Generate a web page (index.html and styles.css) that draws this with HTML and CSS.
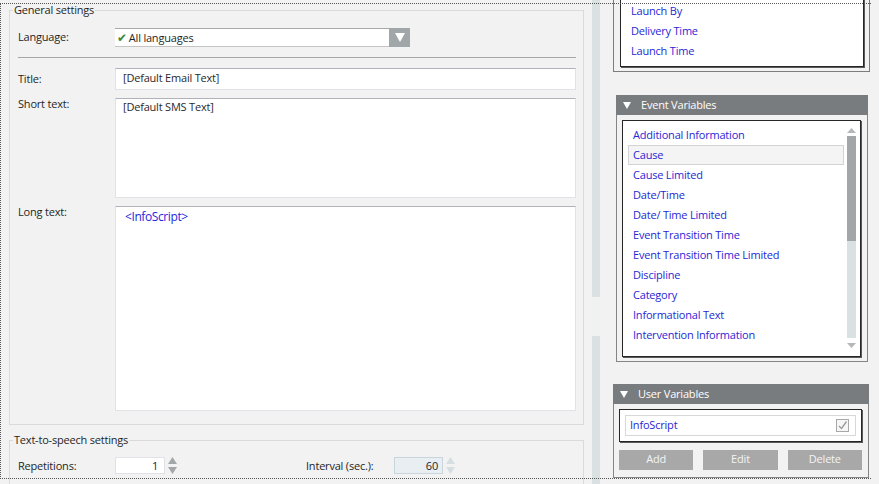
FILE: index.html
```html
<!DOCTYPE html>
<html>
<head>
<meta charset="utf-8">
<link rel="stylesheet" href="styles.css">
</head>
<body>
<div class="app">
  <div class="left">
    <fieldset class="group general">
      <legend>General settings</legend>
      <div class="form">
        <div class="row">
          <span class="lbl lbl-lang">Language:</span>
          <div class="select">
            <span class="check">✔</span><span class="sel-text">All languages</span>
            <span class="sel-btn"><svg width="10" height="9" viewBox="0 0 10 9"><polygon points="0,0 10,0 5,9" fill="#fff"/></svg></span>
          </div>
        </div>
        <div class="sep"></div>
        <div class="row">
          <span class="lbl">Title:</span>
          <div class="field input">[Default Email Text]</div>
        </div>
        <div class="row top">
          <span class="lbl lbl-short">Short text:</span>
          <div class="field area short">[Default SMS Text]</div>
        </div>
        <div class="row top">
          <span class="lbl lbl-long">Long text:</span>
          <div class="field area long"><span class="var">&lt;InfoScript&gt;</span></div>
        </div>
      </div>
    </fieldset>
    <fieldset class="group tts">
      <legend>Text-to-speech settings</legend>
      <div class="tts-row">
        <span class="lbl">Repetitions:</span>
        <div class="spin">
          <div class="spin-box">1</div>
          <svg class="spin-arrows" width="9" height="17" viewBox="0 0 9 17"><polygon points="4.5,0 9,7 0,7" fill="#a2a7aa"/><polygon points="0,10 9,10 4.5,17" fill="#a2a7aa"/></svg>
        </div>
        <span class="lbl lbl-interval">Interval (sec.):</span>
        <div class="spin disabled">
          <div class="spin-box">60</div>
          <svg class="spin-arrows" width="9" height="17" viewBox="0 0 9 17"><polygon points="4.5,0 9,7 0,7" fill="#d6dee2"/><polygon points="0,10 9,10 4.5,17" fill="#d6dee2"/></svg>
        </div>
      </div>
    </fieldset>
  </div>
  <div class="splitter"><div class="grip"></div></div>
  <div class="right">
    <div class="outer-box">
      <div class="list-box top-list">
        <div class="item">Launch By</div>
        <div class="item">Delivery Time</div>
        <div class="item">Launch Time</div>
      </div>
    </div>
    <div class="panel event">
      <div class="panel-head">
        <svg width="8" height="7" viewBox="0 0 8 7"><polygon points="0,0 8,0 4,7" fill="#fff"/></svg>
        <span>Event Variables</span>
      </div>
      <div class="panel-body">
        <div class="list-box scroll-list">
          <div class="items">
            <div class="item">Additional Information</div>
            <div class="item selected">Cause</div>
            <div class="item">Cause Limited</div>
            <div class="item">Date/Time</div>
            <div class="item">Date/ Time Limited</div>
            <div class="item">Event Transition Time</div>
            <div class="item">Event Transition Time Limited</div>
            <div class="item">Discipline</div>
            <div class="item">Category</div>
            <div class="item">Informational Text</div>
            <div class="item">Intervention Information</div>
          </div>
          <div class="scrollbar">
            <svg class="arrow" width="9" height="5" viewBox="0 0 9 5"><polygon points="4.5,0 9,5 0,5" fill="#b4b8ba"/></svg>
            <div class="track"><div class="thumb"></div></div>
            <svg class="arrow" width="9" height="5" viewBox="0 0 9 5"><polygon points="0,0 9,0 4.5,5" fill="#b4b8ba"/></svg>
          </div>
        </div>
      </div>
    </div>
    <div class="panel user">
      <div class="panel-head">
        <svg width="8" height="7" viewBox="0 0 8 7"><polygon points="0,0 8,0 4,7" fill="#fff"/></svg>
        <span>User Variables</span>
      </div>
      <div class="panel-body">
        <div class="list-box user-list">
          <div class="user-item">
            <span>InfoScript</span>
            <span class="cb"><svg width="11" height="11" viewBox="0 0 11 11"><polyline points="2,6 4.5,8.5 9.5,1.5" fill="none" stroke="#9a9a9a" stroke-width="1.3"/></svg></span>
          </div>
        </div>
        <div class="buttons">
          <button class="btn">Add</button>
          <button class="btn">Edit</button>
          <button class="btn">Delete</button>
        </div>
      </div>
    </div>
  </div>
  <div class="focus-rect"></div>
</div>
</body>
</html>
```

FILE: styles.css
```css
* { box-sizing: border-box; }
html, body { margin: 0; padding: 0; }
body {
  background: #f2f2f2;
  font-family: "Open Sans", "Segoe UI", sans-serif;
  font-size: 11px;
  letter-spacing: -0.2px;
  color: #1f1f1f;
  overflow: hidden;
}
.app {
  position: relative;
  display: flex;
  width: 879px;
  height: 484px;
  overflow: hidden;
}
.left {
  width: 592px;
  flex: none;
  padding: 2px 8px 0 9px;
}
.group {
  margin: 0;
  padding: 0;
  border: 1px solid #dadada;
  min-width: 0;
}
.group legend {
  margin-left: 3px;
  padding: 0 1px;
  line-height: 16px;
  height: 16px;
}
.group legend { padding-bottom: 0; }
.form {
  padding: 10px 7px 13px 8px;
}
.row {
  display: flex;
  align-items: center;
}
.row + .row { margin-top: 8px; }
.row.top { align-items: flex-start; }
.lbl {
  width: 97px;
  flex: none;
  line-height: 16px;
}
.lbl-lang { padding-bottom: 2px; }
.lbl-short { margin-top: -2px; }
.lbl-long { margin-top: -2px; }
.select {
  width: 295px;
  height: 19px;
  display: flex;
  align-items: center;
  background: #fff;
  border-top: 1px solid #a9a9a9;
  border-bottom: 1px solid #c4c4c4;
  line-height: 15px;
}
.check {
  color: #3b8a3b;
  font-size: 12px;
  padding: 0 2px 0 2px;
}
.sel-text { flex: 1; }
.sel-btn {
  width: 21px;
  height: 19px;
  margin-top: -1px;
  margin-bottom: -1px;
  background: #a1a6a9;
  display: flex;
  align-items: center;
  justify-content: center;
}
.sep {
  height: 1px;
  background: #a6a6a6;
  margin: 10px 0;
}
.field {
  flex: 1;
  background: #fff;
  border: 1px solid #e1e1e7;
  border-top-color: #b1b1b9;
  color: #2a2a2a;
  padding-left: 7px;
}
.input {
  height: 22px;
  line-height: 17px;
}
.area {
  line-height: 16px;
  padding-top: 0;
}
.short { height: 100px; }
.long { height: 205px; padding-left: 9px; padding-top: 2px; }
.var {
  color: #2626e0;
  font-size: 12px;
  letter-spacing: -0.4px;
}
.tts { margin-top: 7px; height: 80px; }
.tts-row {
  display: flex;
  align-items: center;
  padding: 9px 0 0 8px;
}
.spin {
  display: flex;
  align-items: center;
  gap: 3px;
}
.spin-box {
  width: 50px;
  height: 17px;
  background: #fff;
  border: 1px solid #e0e0e6;
  text-align: right;
  padding-right: 6px;
  line-height: 15px;
}
.disabled .spin-box {
  width: 49px;
  background: #e8eef1;
  border-color: #c9d5dc;
  padding-right: 4px;
}
.lbl-interval {
  margin-left: 129px;
  width: 88px;
}
.splitter {
  width: 8px;
  flex: none;
  background: #d9e1e3;
  padding-top: 297px;
}
.grip {
  height: 39px;
  background: #f0f2f2;
}
.right {
  flex: 1;
  min-width: 0;
  color: #2727d6;
}
.outer-box {
  margin: -10px 0 0 13px;
  width: 257px;
  border: 1px solid #7d7d7d;
  padding: 5px 5px 4px 6px;
}
.list-box {
  background: #fff;
  border: 1px solid #262626;
  box-shadow: 1px 1px 0 #5a5a5a;
}
.top-list {
  padding: 4px 0 5px 10px;
}
.item {
  height: 20px;
  line-height: 20px;
}
.panel {
  margin-top: 22px;
}
.panel.event { margin-top: 23px; margin-left: 16px; width: 252px; }
.panel.user { margin-left: 13px; width: 256px; }
.panel-head {
  height: 20px;
  background: #797c7e;
  color: #fff;
  display: flex;
  align-items: center;
  padding-left: 7px;
  gap: 10px;
}
.panel-head span { line-height: 20px; }
.panel-body {
  border: 1px solid #858585;
  border-top: none;
}
.event .panel-body {
  padding: 5px 6px 4px 5px;
}
.scroll-list {
  height: 237px;
  display: flex;
  padding: 4px 4px 0 5px;
  overflow: hidden;
}
.items {
  flex: 1;
  min-width: 0;
  margin-right: 3px;
}
.items .item { padding-left: 5px; }
.items .item.selected {
  background: #f4f4f4;
  border: 1px solid #d3d3d3;
  line-height: 18px;
  padding-left: 4px;
}
.scrollbar {
  width: 9px;
  display: flex;
  flex-direction: column;
  align-items: center;
  padding-top: 3px;
}
.scrollbar .arrow { flex: none; }
.track {
  width: 9px;
  height: 202px;
  margin: 3px 0 5px;
  background: #d9e1e3;
}
.thumb {
  height: 105px;
  background: #a2a6a8;
}
.user .panel-body {
  padding: 5px 6px 7px 5px;
}
.user-list {
  padding: 5px;
}
.user-item {
  height: 21px;
  border: 1px solid #d8d8d8;
  display: flex;
  align-items: center;
  justify-content: space-between;
  padding: 0 6px 0 4px;
  line-height: 17px;
}
.user-item span:first-child { padding-bottom: 2px; }
.cb {
  width: 13px;
  height: 13px;
  border: 1px solid #a8a8a8;
  background: #f6f6f6;
  display: flex;
  align-items: center;
  justify-content: center;
}
.buttons {
  display: flex;
  gap: 10px;
  margin-top: 8px;
}
.btn {
  width: 75px;
  height: 20px;
  border: none;
  background: #a8a8a8;
  color: #f4f4f4;
  font-family: "Open Sans", "Segoe UI", sans-serif;
  font-size: 11px;
  letter-spacing: -0.2px;
  line-height: 18px;
  padding: 0 0 2px;
}
.focus-rect {
  position: absolute;
  left: 0;
  top: 3px;
  width: 871px;
  height: 476px;
  border: 1px dotted #555;
  border-right: none;
  pointer-events: none;
}
```
